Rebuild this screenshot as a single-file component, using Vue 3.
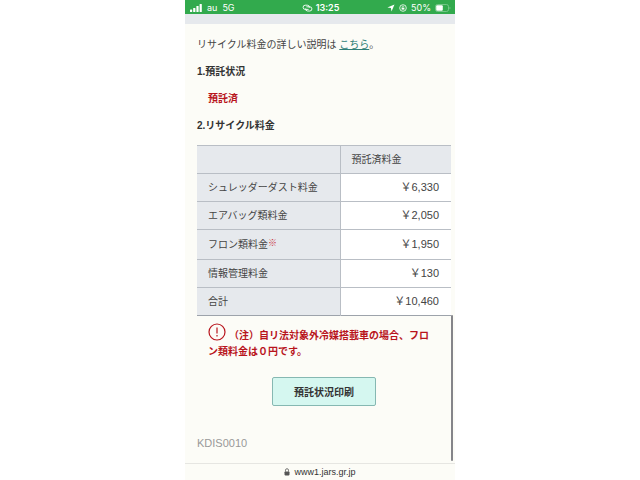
<template>
  <div class="phone">
    <header class="status-bar">
      <div class="status-left">
        <svg class="signal" viewBox="0 0 12 8" aria-hidden="true">
          <rect x="0" y="5.5" width="2.2" height="2.5" rx="0.5" />
          <rect x="3.2" y="4" width="2.2" height="4" rx="0.5" />
          <rect x="6.4" y="2" width="2.2" height="6" rx="0.5" />
          <rect x="9.6" y="0" width="2.2" height="8" rx="0.5" />
        </svg>
        <span>au</span>
        <span>5G</span>
      </div>
      <div class="status-center">
        <svg class="link-icon" viewBox="0 0 11 8" aria-hidden="true">
          <path d="M6.6 5.4H3.2a2.1 2.1 0 0 1 0-4.2h2.2a2.1 2.1 0 0 1 1.9 2.6" />
          <path d="M4.4 2.8h3.4a2.1 2.1 0 0 1 0 4.2H5.6a2.1 2.1 0 0 1-1.9-2.6" />
        </svg>
        <span class="clock">13:25</span>
      </div>
      <div class="status-right">
        <svg class="small-icon" viewBox="0 0 8 8" aria-hidden="true">
          <path d="M7.5 0.5 4.5 7.6 3.9 4.1 0.4 3.6z" fill="#fff" />
        </svg>
        <svg class="small-icon" viewBox="0 0 8 8" aria-hidden="true">
          <circle cx="4" cy="4" r="3.3" fill="none" stroke="#fff" stroke-width="0.8" />
          <rect x="2.6" y="3.6" width="2.8" height="2" fill="#fff" />
          <path d="M3.1 3.6V3a0.9 0.9 0 0 1 1.8 0" fill="none" stroke="#fff" stroke-width="0.6" />
        </svg>
        <span>50%</span>
        <svg class="battery" viewBox="0 0 16 8" aria-hidden="true">
          <rect x="0.5" y="0.5" width="13" height="7" rx="2" fill="none" stroke="#84cd95" stroke-width="0.8" />
          <rect x="1.2" y="1.2" width="6.6" height="5.6" rx="1" fill="#fff" />
          <path d="M14.6 2.8c1.1 0.4 1.1 2 0 2.4z" fill="#84cd95" />
        </svg>
      </div>
    </header>
    <div class="band"></div>

    <main class="content">
      <p class="line">リサイクル料金の詳しい説明は <a href="#">こちら</a>。</p>
      <h2 class="line">1.預託状況</h2>
      <p class="line status">預託済</p>
      <h2 class="line">2.リサイクル料金</h2>

      <table class="fees">
        <thead>
          <tr>
            <th></th>
            <th scope="col">預託済料金</th>
          </tr>
        </thead>
        <tbody>
          <tr v-for="fee in fees" :key="fee.name" :class="{ marked: fee.marked }">
            <th scope="row">{{ fee.name }}<span v-if="fee.marked" class="mark">※</span></th>
            <td>￥{{ fee.amount }}</td>
          </tr>
        </tbody>
      </table>

      <p class="note">
        <svg class="alert-icon" viewBox="0 0 18 18" aria-hidden="true">
          <circle cx="9" cy="9" r="8" />
          <path d="M9 4.5v6M9 12v1.4" />
        </svg>（注）自リ法対象外冷媒搭載車の場合、フロン類料金は０円です。
      </p>

      <button type="button" class="print">預託状況印刷</button>
      <p class="screen-id">KDIS0010</p>
      <div class="scroll-thumb"></div>
    </main>

    <footer class="address-bar">
      <svg class="lock" viewBox="0 0 6 8" aria-hidden="true">
        <rect x="0.5" y="3.4" width="5" height="4" rx="0.8" fill="#555" />
        <path d="M1.5 3.6V2.2a1.5 1.5 0 0 1 3 0v1.4" fill="none" stroke="#555" stroke-width="0.8" />
      </svg>
      <span>www1.jars.gr.jp</span>
    </footer>
  </div>
</template>

<script setup>
const fees = [
  { name: 'シュレッダーダスト料金', amount: '6,330' },
  { name: 'エアバッグ類料金', amount: '2,050' },
  { name: 'フロン類料金', amount: '1,950', marked: true },
  { name: '情報管理料金', amount: '130' },
  { name: '合計', amount: '10,460' }
];
</script>

<style>
body {
  background: #fff;
}
</style>

<style scoped>
.phone {
  display: flex;
  flex-direction: column;
  max-width: 270px;
  min-height: 100vh;
  margin: 0 auto;
  background: #fcfcf7;
  color: #444;
  font-family: "Liberation Sans", "Noto Sans CJK JP", sans-serif;
  font-size: 10px;
  line-height: 15px;
}

.status-bar {
  display: grid;
  grid-template-columns: 1fr auto 1fr;
  align-items: center;
  height: 14px;
  padding: 0 4px 0 5px;
  background: #32aa4d;
  color: #fff;
  font-family: Inter, "Liberation Sans", sans-serif;
  font-size: 9px;
}

.status-left,
.status-center,
.status-right {
  display: flex;
  align-items: center;
  gap: 5px;
}

.status-center {
  gap: 3px;
}

.status-right {
  justify-content: flex-end;
  gap: 4px;
}

.clock {
  font-weight: 600;
}

.signal {
  width: 12px;
  height: 8px;
  fill: #fff;
}

.link-icon {
  width: 11px;
  height: 8px;
  fill: none;
  stroke: #fff;
  stroke-width: 0.9;
}

.small-icon {
  width: 8px;
  height: 8px;
}

.battery {
  width: 16px;
  height: 8px;
}

.band {
  height: 10px;
  background: #e6e9ed;
}

.content {
  position: relative;
  flex: 1;
  padding: 13px 4px 0 12px;
}

.line {
  margin: 0 0 12px;
  font-size: 10px;
}

h2.line {
  color: #333;
  font-weight: bold;
}

.line a {
  color: #2f7f78;
}

.line.status {
  padding-left: 11px;
  color: #b8141c;
  font-weight: bold;
}

.fees {
  width: 100%;
  border-collapse: collapse;
  border-bottom: 1px solid #9da3ab;
}

.fees th,
.fees td {
  box-sizing: border-box;
  height: 28px;
  padding: 0 12px 0 11px;
  border-top: 1px solid #b9bec5;
  font-weight: normal;
  text-align: left;
}

.fees .marked th,
.fees .marked td {
  height: 30px;
}

.fees th {
  background: #e6e9ed;
}

.fees th:first-child {
  width: 143px;
  border-right: 1px solid #b9bec5;
}

.fees td {
  background: #fff;
  font-size: 11px;
  text-align: right;
}

.mark {
  position: relative;
  top: -2px;
  color: #c8323a;
  font-size: 9px;
}

.note {
  margin: 7px 20px 0 11px;
  color: #b8141c;
  font-weight: bold;
  line-height: 16px;
}

.alert-icon {
  width: 18px;
  height: 18px;
  margin-right: 3px;
  vertical-align: -2px;
  fill: none;
  stroke: #b8141c;
  stroke-width: 1.2;
}

.print {
  display: block;
  height: 29px;
  margin: 17px auto 0;
  padding: 0 21px;
  border: 1px solid #86b8b2;
  border-radius: 2px;
  background: #d5f7f0;
  color: #333;
  font-family: inherit;
  font-size: 10px;
  font-weight: bold;
}

.screen-id {
  margin: 30px 0 12px;
  color: #999;
  font-size: 11px;
}

.scroll-thumb {
  position: absolute;
  right: 2px;
  bottom: 2px;
  width: 2px;
  height: 146px;
  border-radius: 1px;
  background: #85858a;
}

.address-bar {
  display: flex;
  align-items: center;
  justify-content: center;
  gap: 4px;
  height: 16px;
  border-top: 1px solid #e6e6e2;
  color: #333;
  font-family: "Liberation Sans", sans-serif;
  font-size: 9px;
}

.lock {
  width: 6px;
  height: 8px;
}
</style>
